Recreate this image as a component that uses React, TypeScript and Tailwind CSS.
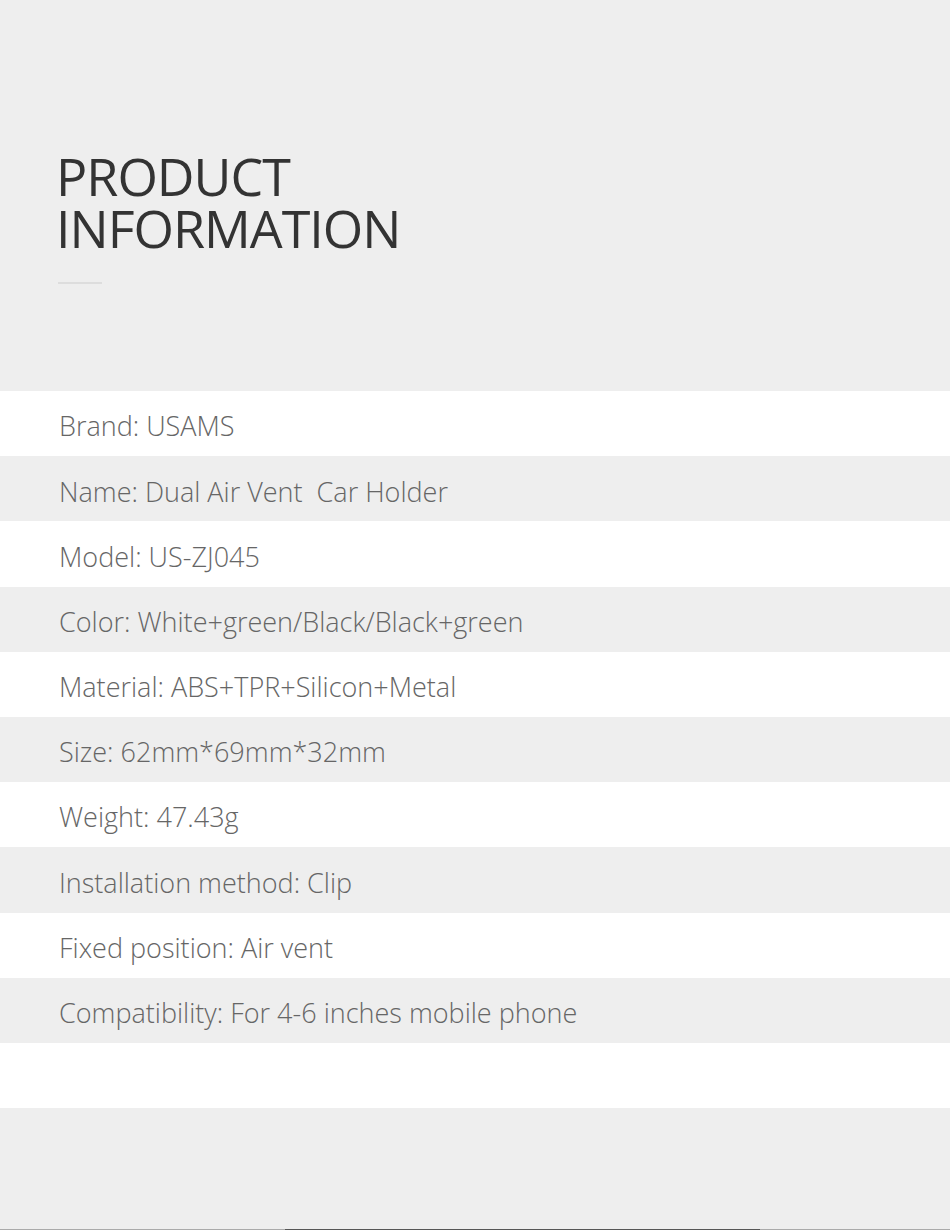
const rows = [
  "Brand: USAMS",
  "Name: Dual Air Vent\u00a0 Car Holder",
  "Model: US-ZJ045",
  "Color: White+green/Black/Black+green",
  "Material: ABS+TPR+Silicon+Metal",
  "Size: 62mm*69mm*32mm",
  "Weight: 47.43g",
  "Installation method: Clip",
  "Fixed position: Air vent",
  "Compatibility: For 4-6 inches mobile phone",
  "",
];

export default function App() {
  return (
    <div
      className="w-[950px] h-[1230px] bg-[#eeeeee] flex flex-col overflow-hidden"
      style={{ fontFamily: '"Open Sans", "Liberation Sans", sans-serif' }}
    >
      <div className="h-[391px] pt-[150px] pl-[56px]">
        <h1 className="text-[52px] leading-[52px] text-[#333333] font-normal tracking-[-1px]">
          PRODUCT
          <br />
          INFORMATION
        </h1>
        <div className="mt-[28px] ml-[2px] w-[44px] h-[2px] bg-[#dddddd]" />
      </div>

      {rows.map((text, i) => (
        <div
          key={i}
          className={`h-[65.2px] flex items-center pl-[59px] pt-[6px] ${
            i % 2 === 0 ? "bg-white" : "bg-[#eeeeee]"
          }`}
        >
          <span className="text-[27px] font-light text-[#666666]">{text}</span>
        </div>
      ))}

      <div className="flex-1" />
      <div className="h-px flex">
        <div className="w-[285px] bg-[#aaaaaa]" />
        <div className="w-[475px] bg-[#555555]" />
        <div className="flex-1 bg-[#aaaaaa]" />
      </div>
    </div>
  );
}
